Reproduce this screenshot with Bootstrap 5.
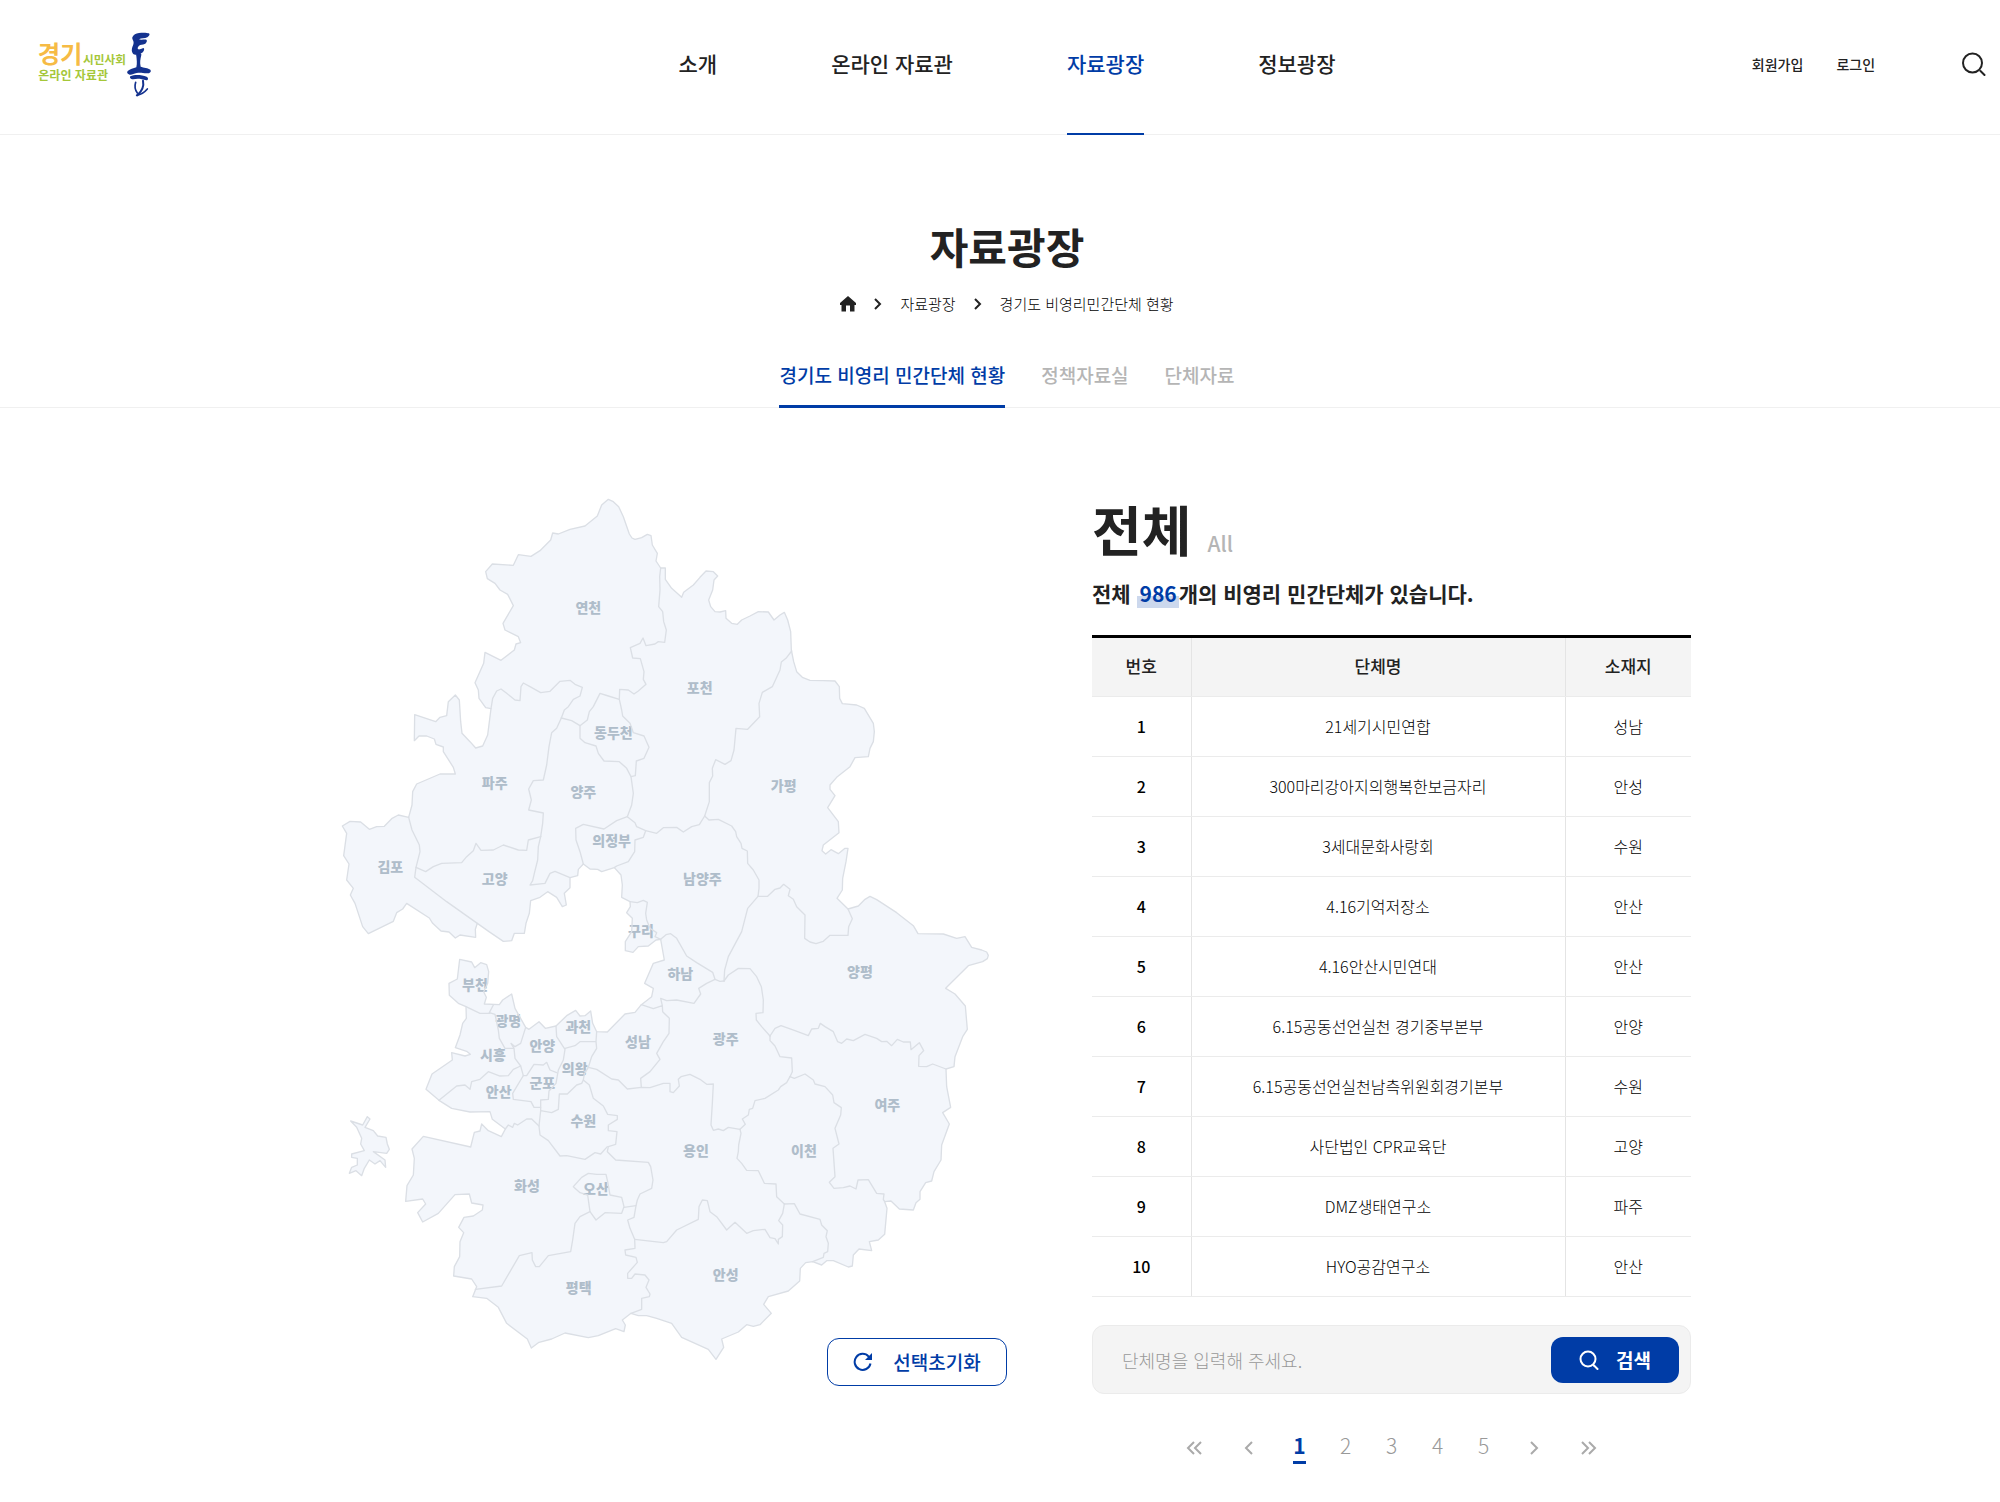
<!DOCTYPE html>
<html lang="ko">
<head>
<meta charset="utf-8">
<meta name="viewport" content="width=device-width, initial-scale=1">
<title>경기도 비영리민간단체 현황 - 자료광장</title>
<link href="https://cdn.jsdelivr.net/npm/bootstrap@5.3.0/dist/css/bootstrap.min.css" rel="stylesheet">
<style>
:root { --brand: #003ca6; --ink: #222; --muted: #b5b5b5; --line: #f0f0f0; }
body { font-family: "Noto Sans CJK KR", "Noto Sans", sans-serif; color: var(--ink); background: #fff; font-size: 16px; line-height: 24px; }
a { color: inherit; text-decoration: none; }
svg { display: block; }
.medium { font-weight: 500; }
.thin { font-weight: 300; color: #000; }

.site-head { height: 135px; border-bottom: 1px solid var(--line); }
.head-side { flex: 1 1 0; }
.brand-link { margin-left: 36px; }
.main-menu { gap: 114px; padding-left: 28px; font-size: 21px; }
.main-menu a { line-height: 127px; height: 135px; display: block; }
.main-menu a.current { color: var(--brand); border-bottom: 2px solid var(--brand); }
.user-menu { gap: 33px; font-size: 14px; padding-right: 14px; margin-top: -7px; }
.search-toggle { margin-left: 54px; padding: 0; border: 0; background: none; color: var(--ink); }

.page-head { border-bottom: 1px solid var(--line); padding: 80px 0 0 14px; }
.page-title { font-size: 42px; line-height: 62px; font-weight: 700; margin: 0; }
.trail { gap: 18px; font-size: 15px; margin: 15px 0 0; }
.section-tabs { gap: 36px; font-size: 19px; margin-top: 38px; color: var(--muted); }
.section-tabs a { display: block; line-height: 42px; padding-bottom: 9px; }
.section-tabs a.current { color: var(--brand); border-bottom: 3px solid var(--brand); margin-bottom: -1px; }

.content-wrap { max-width: 1382px; margin: 90px auto 30px; gap: 85px; }
.map-pane { flex: 1 1 0; min-width: 0; }
.list-pane { flex: 0 0 599px; }
.region-map { width: 100%; height: auto; }
.land { fill: #f3f6fb; }
.edge { fill: none; stroke: #dbdfe5; stroke-width: 4; stroke-linejoin: round; stroke-linecap: round; }
.place { font-size: 42px; font-weight: 900; fill: #afbdca; text-anchor: middle; }
.reset-btn { width: 180px; height: 48px; margin-top: -24px; border: 1px solid var(--brand); border-radius: 12px; background: #fff; color: var(--brand); font-size: 19px; gap: 20px; position: relative; }

.list-top { margin-top: -3px; }
.list-title { font-size: 54px; line-height: 68px; font-weight: 700; margin: 0; }
.list-sub { font-size: 21px; color: var(--muted); margin: 0 0 8px 16px; }
.list-count { font-size: 21px; line-height: 30px; font-weight: 700; margin: 15px 0 27px; }
.hit-count { color: var(--brand); padding: 0 2px 0 3px; background: linear-gradient(transparent 60%, #ccd8ed 60%); }
.org-table { width: 100%; table-layout: fixed; border-top: 3px solid #000; text-align: center; }
.org-table th, .org-table td { height: 60px; padding: 0 8px 2px; border-bottom: 1px solid #ebebeb; vertical-align: middle; }
.org-table th + th, .org-table th + td, .org-table td + td { border-left: 1px solid #e4e4e4; }
.org-table thead th { background: #f4f4f4; font-size: 17px; }
.col-num { width: 99px; }
.col-place { width: 126px; }

.find-box { margin-top: 28px; height: 69px; border: 1px solid #ebebeb; border-radius: 12px; background: #f4f4f4; padding: 0 11px 0 29px; }
.find-box input { flex: 1 1 0; min-width: 0; height: 44px; line-height: 32px; border: 0; background: none; outline: 0; font-size: 18px; font-weight: 300; padding: 0; }
.find-box input::placeholder { color: #999; opacity: 1; }
.find-btn { width: 128px; height: 46px; border: 0; border-radius: 12px; background: var(--brand); color: #fff; font-size: 19px; font-weight: 700; gap: 17px; }
.pager { margin: 35px 0 0; gap: 33px; font-size: 21px; color: #999; }
.pager a { display: block; width: 13px; text-align: center; line-height: 32px; }
.pager a.current { color: var(--brand); font-weight: 700; border-bottom: 3px solid var(--brand); }
.pager a.step { width: 16px; margin: 3px 3px 0; color: #aaa; }
</style>
</head>
<body>
<header class="site-head d-flex align-items-center">
  <div class="head-side">
    <a class="brand-link d-inline-block" href="#" aria-label="경기시민사회 온라인 자료관 톺">
      <svg width="116" height="70" viewBox="18 18 348 210">
        <g font-weight="700">
          <text x="23" y="118" font-size="73" fill="#f6bb45">경기</text>
          <text x="159" y="121" font-size="35" fill="#a5c739">시민사회</text>
          <text x="25" y="169" font-size="36" fill="#a5c739">온라인 자료관</text>
        </g>
        <g fill="#14328f">
          <path d="M307 40c4-9 10-12 20-13 12-2 25-1 30 1 4 3 0 9-5 12-8 4-18 2-25 6 5 3 16 0 22 1 4 3 0 10-5 13-6 3-13 2-17 5-5 5-5 9-2 11 4 1 9-2 15-4 4 1 3 8-1 12-3 4-8 4-12 6-6 4-14 3-18-1-5-6-4-13-2-20 3-7 5-11 3-18-2-5-4-6-3-11z"/>
          <path d="M321 88c7-3 14-1 13 5-3 12-5 22-2 35 8 3 23 4 29 9 4 6-1 11-10 11-14-1-20-3-31-1-9 2-14 6-21 5-6-2-10-6-6-11 7-6 17-8 26-11 3-12 1-24 0-34-1-3-1-5 2-8z"/>
          <path d="M301 157c14-6 34-4 49 1 6 3 5 11-1 11-15-5-28-6-39-3-6 1-13-5-9-9z"/>
        </g>
        <g fill="none" stroke="#14328f" stroke-linecap="round" stroke-linejoin="round">
          <path d="M317 175c-4 13-3 22 5 32" stroke-width="5"/>
          <path d="M339 170c3 14-2 30-17 44" stroke-width="6"/>
          <path d="M320 214c13-2 22-7 32-19" stroke-width="5"/>
        </g>
      </svg>
    </a>
  </div>
  <nav class="main-menu medium d-flex" aria-label="주 메뉴">
    <a href="#">소개</a>
    <a href="#">온라인 자료관</a>
    <a href="#" class="current" aria-current="page">자료광장</a>
    <a href="#">정보광장</a>
  </nav>
  <div class="head-side user-menu medium d-flex justify-content-end align-items-center">
    <a href="#">회원가입</a>
    <a href="#">로그인</a>
    <button type="button" class="search-toggle" aria-label="검색 열기">
      <svg width="24" height="24" viewBox="0 0 24 24" fill="none" stroke="currentColor" stroke-width="2" stroke-linecap="round"><circle cx="10.500" cy="11" r="9.500"/><path d="M18.500 19l4 4"/></svg>
    </button>
  </div>
</header>

<main>
  <section class="page-head d-flex flex-column align-items-center">
    <h1 class="page-title">자료광장</h1>
    <nav class="trail thin d-flex align-items-center" aria-label="현재 위치">
      <a href="#" aria-label="홈"><svg width="16" height="16" viewBox="0 0 16 16" fill="#222"><path d="M8 0L0 7v2h1.500v6.500h4.500v-6h4v6h4.500V9H16V7z"/></svg></a>
      <svg width="8" height="12" viewBox="0 0 8 12" fill="none" stroke="#222" stroke-width="2"><path d="M1 1l5 5-5 5"/></svg>
      <a href="#">자료광장</a>
      <svg width="8" height="12" viewBox="0 0 8 12" fill="none" stroke="#222" stroke-width="2"><path d="M1 1l5 5-5 5"/></svg>
      <a href="#" aria-current="page">경기도 비영리민간단체 현황</a>
    </nav>
    <nav class="section-tabs medium d-flex" aria-label="자료광장 메뉴">
      <a href="#" class="current" aria-current="page">경기도 비영리 민간단체 현황</a>
      <a href="#">정책자료실</a>
      <a href="#">단체자료</a>
    </nav>
  </section>

  <div class="content-wrap d-flex align-items-start">
    <section class="map-pane d-flex flex-column align-items-end" aria-label="경기도 지도">
      <svg class="region-map" viewBox="-63 24 2094 2592" role="img" aria-label="경기도 시군 지도">
        <defs>
          <path id="province" d="M835 28L850 35 866 50 880 80 898 132 906 144 915 148 935 143 952 133 963 137 967 165 982 190 978 213 992 234 1006 234 1006 268 1025 295 1055 322 1061 307 1090 285 1110 262 1128 243 1150 245 1163 258 1152 270 1148 300 1136 330 1142 350 1155 365 1170 366 1187 362 1188 385 1205 400 1222 403 1235 390 1260 378 1285 365 1315 366 1332 390 1350 375 1363 367 1373 390 1382 425 1384 480 1391 515 1400 545 1417 562 1440 571 1480 572 1515 573 1528 590 1529 625 1537 641 1580 645 1603 655 1630 700 1633 725 1630 755 1620 775 1615 800 1575 803 1560 830 1520 862 1500 885 1500 898 1515 917 1493 953 1525 995 1527 1028 1480 1065 1476 1082 1487 1092 1503 1079 1525 1091 1545 1075 1554 1075 1548 1115 1538 1165 1537 1200 1521 1225 1554 1257 1585 1248 1605 1228 1620 1219 1640 1229 1700 1268 1750 1307 1764 1331 1840 1332 1880 1345 1905 1340 1925 1372 1955 1380 1970 1386 1975 1396 1972 1406 1958 1415 1915 1427 1847 1495 1875 1512 1906 1548 1912 1618 1898 1640 1875 1700 1872 1730 1848 1737 1850 1790 1862 1852 1838 1868 1858 1902 1835 1965 1833 2010 1812 2045 1805 2073 1787 2078 1770 2105 1770 2128 1758 2138 1750 2160 1708 2157 1683 2133 1664 2135 1671 2155 1664 2233 1645 2250 1618 2255 1625 2282 1587 2277 1570 2295 1567 2328 1555 2331 1510 2312 1490 2312 1475 2325 1448 2315 1427 2318 1411 2335 1409 2373 1375 2403 1315 2420 1301 2443 1324 2470 1290 2504 1270 2509 1250 2504 1225 2526 1175 2547 1181 2572 1158 2608 1135 2578 1055 2542 1025 2500 980 2485 950 2477 925 2477 903 2470 877 2490 886 2505 882 2525 857 2516 805 2537 775 2543 705 2529 665 2547 627 2557 604 2574 592 2547 530 2500 505 2452 470 2425 428 2420 440 2390 425 2367 371 2358 373 2330 389 2300 390 2255 401 2228 386 2212 402 2182 430 2178 457 2160 459 2145 425 2139 418 2112 375 2114 325 2170 278 2196 263 2168 287 2142 278 2127 227 2134 231 2087 250 2055 253 2005 246 1977 280 1939 422 1971 433 1927 450 1923 455 1902 475 1922 514 1940 526 1917 487 1888 480 1865 420 1866 365 1855 327 1831 288 1798 306 1752 367 1710 365 1688 405 1698 421 1693 410 1684 376 1673 390 1635 398 1600 409 1585 408 1550 385 1540 358 1516 357 1480 382 1467 389 1408 425 1416 434 1433 452 1418 470 1424 476 1445 473 1480 461 1505 469 1522 463 1542 508 1544 518 1530 545 1512 555 1555 587 1612 597 1618 627 1595 646 1615 678 1608 710 1577 737 1561 750 1578 765 1577 782 1563 788 1600 800 1625 832 1626 885 1572 915 1567 934 1544 965 1520 970 1495 944 1480 970 1420 1003 1410 992 1348 978 1350 955 1368 925 1370 909 1387 886 1382 886 1355 905 1325 907 1285 890 1268 901 1250 900 1235 875 1222 877 1185 873 1155 853 1133 815 1145 803 1138 780 1137 760 1122 745 1138 743 1157 720 1163 720 1193 703 1210 709 1245 697 1250 680 1222 653 1205 630 1222 602 1232 598 1270 588 1300 583 1330 553 1330 545 1352 520 1354 477 1325 442 1300 436 1318 437 1342 390 1335 376 1344 357 1326 333 1323 308 1300 298 1284 230 1240 218 1257 200 1268 190 1294 115 1331 98 1310 75 1240 61 1215 70 1195 50 1170 57 1122 41 1097 50 1030 37 1008 60 994 92 996 118 1018 140 1010 163 1009 185 986 205 975 236 982 246 945 248 905 260 882 330 852 376 852 370 832 340 785 340 771 318 763 313 747 290 738 267 738 253 752 254 674 317 695 330 682 350 677 355 635 376 615 388 630 392 695 396 730 420 755 437 774 458 768 473 735 483 656 467 653 447 625 445 600 435 578 461 520 465 487 513 511 553 480 558 462 572 458 565 440 525 420 519 400 550 347 533 313 510 300 495 280 472 266 467 245 487 222 550 226 565 194 603 199 630 182 662 150 668 129 685 132 720 118 765 108 802 78 815 45Z"/>
        </defs>
        <use href="#province" class="land"/>
        <path class="edge" style="fill:#f3f6fb" d="M62 1893L98 1905 112 1880 120 1887 105 1912 130 1922 143 1938 168 1942 172 1962 178 1978 170 1990 130 1985 165 2010 167 2032 150 2012 135 2022 118 2010 103 2035 95 2057 78 2042 58 2050 65 2032 82 2025 82 2005 65 2002 65 1992 103 1982 92 1962 95 1945 80 1912Z"/>
        <g class="place">
          <text x="775" y="369">연천</text><text x="1109" y="609">포천</text><text x="850" y="743">동두천</text>
          <text x="494" y="893">파주</text><text x="760" y="920">양주</text><text x="1361" y="902">가평</text>
          <text x="845" y="1068">의정부</text><text x="181" y="1146">김포</text><text x="494" y="1183">고양</text>
          <text x="1117" y="1183">남양주</text><text x="933" y="1337">구리</text><text x="1051" y="1467">하남</text>
          <text x="1590" y="1461">양평</text><text x="435" y="1501">부천</text><text x="535" y="1608">광명</text>
          <text x="745" y="1625">과천</text><text x="637" y="1682">안양</text><text x="924" y="1670">성남</text>
          <text x="489" y="1709">시흥</text><text x="734" y="1751">의왕</text><text x="637" y="1795">군포</text>
          <text x="506" y="1822">안산</text><text x="1187" y="1661">광주</text><text x="1672" y="1861">여주</text>
          <text x="760" y="1907">수원</text><text x="1098" y="1998">용인</text><text x="1422" y="1998">이천</text>
          <text x="591" y="2104">화성</text><text x="798" y="2113">오산</text><text x="746" y="2408">평택</text>
          <text x="1187" y="2370">안성</text>
        </g>
        <use href="#province" class="edge"/>
        <g class="edge">
          <path d="M992 234L989 260 990 300 986 350 998 365 1001 395 1009 420 1004 457 985 455 975 462 948 467 939 444 930 460 901 473 908 504 931 506 942 545 940 568 948 583 925 603 912 612 895 600 869 598 868 628"/>
          <path d="M483 656L488 625 500 603 513 597 530 610 555 630 570 632 573 590 580 579 600 590 632 608 660 604 690 574 720 571 735 583 757 592 750 618 730 628 715 650 703 660 694 684"/>
          <path d="M694 684L725 692 750 707 772 690 778 665 790 650 810 610 835 618 868 628"/>
          <path d="M868 628L875 660 878 678 900 700 910 728 942 738 957 772 942 805 919 813 916 857 903 860"/>
          <path d="M750 707L750 745 765 758 798 768 805 790 822 813 868 815 890 835 903 860 910 910 905 945 892 980"/>
          <path d="M694 684L680 715 665 728 657 770 650 825 640 870 610 872 596 897 604 930 596 960 640 969 638 1000 632 1040"/>
          <path d="M632 1040L595 1050 590 1081 565 1080 520 1065 490 1080 453 1081 438 1060 430 1082 410 1100 395 1118 335 1120 310 1130 287 1145 258 1132"/>
          <path d="M632 1040L625 1070 623 1110 613 1150 608 1172 600 1185 645 1180 660 1150 675 1144 720 1163"/>
          <path d="M236 982L246 1020 268 1065 270 1085 258 1132 254 1162 350 1235 442 1300"/>
          <path d="M892 980L860 992 822 1017 760 1003 737 1015 738 1050 750 1085 760 1122"/>
          <path d="M892 980L915 998 920 1010 947 1022 940 1042 915 1050 914 1085 895 1115 860 1128 853 1133"/>
          <path d="M947 1022L980 1030 1000 1013 1040 1012 1060 1026 1085 1010 1108 1004 1124 978"/>
          <path d="M1385 483L1368 505 1354 516 1350 540 1327 590 1297 607 1287 640 1289 680 1253 718 1218 715 1212 780 1203 812 1185 823 1157 809 1147 835 1148 858 1138 878 1138 935 1124 978"/>
          <path d="M1124 978L1137 990 1165 988 1205 1008 1217 1025 1220 1040 1233 1060 1236 1075 1252 1083 1253 1120 1270 1140 1287 1170 1287 1195 1284 1219"/>
          <path d="M1284 1219L1313 1219 1335 1198 1350 1194 1361 1183 1380 1198 1375 1217 1390 1228 1400 1250 1425 1275 1424 1345 1440 1356 1458 1361 1480 1354 1500 1336 1554 1336 1556 1310 1567 1286 1554 1257"/>
          <path d="M1284 1219L1253 1255 1235 1325 1195 1400 1184 1440 1182 1473"/>
          <path d="M992 1348L1008 1334 1022 1331 1040 1345 1070 1398 1100 1418 1148 1447 1155 1468 1170 1474 1182 1473"/>
          <path d="M900 1235L922 1238 940 1231 952 1237 947 1270 950 1290 960 1315 980 1328 975 1340 992 1348"/>
          <path d="M1155 1468L1130 1480 1106 1495 1112 1512 1092 1540 1040 1530 1010 1532 992 1525 997 1547"/>
          <path d="M934 1544L970 1556 997 1547 998 1565 1018 1585 1017 1630 1000 1655 980 1690 990 1708 960 1745 932 1765 934 1792"/>
          <path d="M1182 1473L1195 1455 1225 1435 1260 1436 1280 1460 1294 1490 1300 1530 1299 1568 1278 1570 1279 1590 1295 1610 1320 1638"/>
          <path d="M1320 1638L1335 1615 1353 1607 1395 1622 1435 1637 1445 1617 1465 1615 1471 1600 1485 1610 1510 1625 1523 1655 1535 1660 1550 1647 1570 1652 1605 1633 1640 1645 1655 1655 1670 1654 1685 1667 1702 1648 1720 1656 1741 1656 1743 1679 1768 1658 1781 1682 1767 1697 1766 1729 1790 1730 1808 1722 1848 1737"/>
          <path d="M1320 1638L1320 1652 1335 1668 1350 1700 1385 1704 1387 1745 1380 1760"/>
          <path d="M1380 1760L1393 1765 1425 1752 1450 1770 1455 1782 1485 1790 1508 1815 1512 1838 1534 1853 1532 1875 1515 1915 1527 1962 1509 1975 1515 2060 1498 2077 1512 2095 1540 2093 1560 2088 1578 2097 1584 2070 1615 2069 1640 2110 1662 2112 1660 2128 1664 2135"/>
          <path d="M1380 1760L1370 1778 1352 1790 1345 1800 1305 1825 1275 1832 1268 1855 1258 1858 1255 1875 1237 1887 1246 1903 1230 1918"/>
          <path d="M775 1732L800 1738 845 1767 865 1770 892 1797 934 1792 960 1793 1000 1780 1020 1780 1020 1805 1030 1808 1048 1788 1045 1768 1053 1760 1080 1753 1110 1768 1130 1783 1150 1782 1147 1840 1143 1905 1150 1921 1165 1917 1180 1922 1195 1912 1230 1918"/>
          <path d="M1230 1918L1233 1930 1226 1965 1225 1985 1221 2005 1235 2020 1250 2041 1285 2042 1303 2080 1338 2082 1340 2120 1363 2142"/>
          <path d="M1363 2142L1393 2141 1410 2172 1470 2188 1475 2205 1492 2222 1488 2240 1495 2260 1493 2285 1482 2290 1480 2302 1448 2315"/>
          <path d="M1363 2142L1358 2170 1346 2192 1358 2205 1357 2240 1345 2248 1345 2262 1335 2246 1320 2243 1305 2218 1270 2222 1250 2230 1215 2197 1190 2220 1160 2180 1140 2165 1132 2132 1117 2130 1107 2150 1105 2188 1040 2220 1010 2255 1000 2258 914 2248"/>
          <path d="M760 1770L778 1785 790 1825 820 1848 833 1873 862 1877 862 1888 835 1905 835 1922 861 1925 857 1963 835 1970 832 1985 857 2010 955 2017 962 2030 969 2070 965 2095 930 2112 922 2130 918 2147 912 2182 893 2190 900 2215 914 2248"/>
          <path d="M914 2248L915 2275 885 2280 887 2295 918 2302 922 2317 893 2350 893 2365 905 2365 915 2352 945 2355 957 2370 948 2392 960 2412 958 2420 935 2425 935 2458 903 2470"/>
          <path d="M730 2090L755 2062 775 2050 800 2053 828 2053 833 2075 840 2115 875 2122 882 2150 875 2170 825 2168 798 2190 780 2165 773 2115 750 2108Z"/>
          <path d="M882 2152L918 2147"/>
          <path d="M780 2165L750 2180 735 2200 728 2250 722 2285 655 2297 628 2330 617 2330 607 2310 606 2288 568 2297 515 2388 436 2398"/>
          <path d="M526 1917L535 1905 548 1912 553 1900 563 1905 590 1887 605 1887 627 1908 630 1935 655 1952 690 1998 710 1997 765 2008 795 1988 812 1992 832 1970"/>
          <path d="M627 1908L632 1862 665 1868 685 1858 688 1812 712 1812 740 1785 755 1780 760 1770 763 1752 775 1732"/>
          <path d="M800 1625L798 1655 800 1675 785 1700 775 1732M798 1655L750 1655 735 1667 705 1675"/>
          <path d="M678 1608L680 1640 705 1678 700 1710 685 1740 678 1780 657 1803 655 1828 632 1830 632 1862"/>
          <path d="M632 1852L612 1852 603 1835 550 1828 548 1810 572 1770 580 1757 590 1757 612 1723 640 1725 650 1717 660 1740 680 1748"/>
          <path d="M490 1545L478 1568 495 1573 505 1620 508 1645 525 1675 550 1675M408 1550L450 1570 480 1570"/>
          <path d="M587 1612L572 1660 555 1670 543 1660 552 1675 555 1705 572 1728 580 1757"/>
          <path d="M327 1831L380 1788 405 1785 420 1798 425 1775 450 1768 475 1745 510 1758 535 1757 550 1738 572 1728"/>
        </g>
      </svg>
      <button type="button" class="reset-btn medium d-flex align-items-center justify-content-center">
        <svg width="20" height="20" viewBox="0 0 20 20" fill="none" stroke="currentColor" stroke-width="2"><path d="M17.500 11.500A8 8 0 1 1 15.700 4.600L18 7"/><path d="M19 1v7h-7z" fill="currentColor" stroke="none"/></svg>
        선택초기화
      </button>
    </section>

    <section class="list-pane">
      <div class="list-top d-flex align-items-end">
        <h2 class="list-title">전체</h2>
        <span class="list-sub medium">All</span>
      </div>
      <p class="list-count">전체 <span class="hit-count">986</span>개의 비영리 민간단체가 있습니다.</p>
      <table class="org-table">
        <colgroup><col class="col-num"><col><col class="col-place"></colgroup>
        <thead>
          <tr><th scope="col" class="medium">번호</th><th scope="col" class="medium">단체명</th><th scope="col" class="medium">소재지</th></tr>
        </thead>
        <tbody class="thin">
          <tr><th scope="row" class="medium">1</th><td>21세기시민연합</td><td>성남</td></tr>
          <tr><th scope="row" class="medium">2</th><td>300마리강아지의행복한보금자리</td><td>안성</td></tr>
          <tr><th scope="row" class="medium">3</th><td>3세대문화사랑회</td><td>수원</td></tr>
          <tr><th scope="row" class="medium">4</th><td>4.16기억저장소</td><td>안산</td></tr>
          <tr><th scope="row" class="medium">5</th><td>4.16안산시민연대</td><td>안산</td></tr>
          <tr><th scope="row" class="medium">6</th><td>6.15공동선언실천 경기중부본부</td><td>안양</td></tr>
          <tr><th scope="row" class="medium">7</th><td>6.15공동선언실천남측위원회경기본부</td><td>수원</td></tr>
          <tr><th scope="row" class="medium">8</th><td>사단법인 CPR교육단</td><td>고양</td></tr>
          <tr><th scope="row" class="medium">9</th><td>DMZ생태연구소</td><td>파주</td></tr>
          <tr><th scope="row" class="medium">10</th><td>HYO공감연구소</td><td>안산</td></tr>
        </tbody>
      </table>
      <form class="find-box d-flex align-items-center" role="search">
        <input id="orgName" type="text" aria-label="단체명" placeholder="단체명을 입력해 주세요.">
        <button type="button" class="find-btn d-flex align-items-center justify-content-center">
          <svg width="20" height="20" viewBox="0 0 20 20" fill="none" stroke="currentColor" stroke-width="2" stroke-linecap="round"><circle cx="9" cy="9" r="7.500"/><path d="M15 15.500l3.500 3.500"/></svg>
          검색
        </button>
      </form>
      <nav class="pager d-flex justify-content-center" aria-label="페이지">
        <a class="step" href="#" aria-label="처음"><svg width="16" height="32" viewBox="0 0 16 32" fill="none" stroke="currentColor" stroke-width="2"><path d="M8 10l-6 6 6 6M15 10l-6 6 6 6"/></svg></a>
        <a class="step" href="#" aria-label="이전"><svg width="16" height="32" viewBox="0 0 16 32" fill="none" stroke="currentColor" stroke-width="2"><path d="M11 10l-6 6 6 6"/></svg></a>
        <a href="#" class="current" aria-current="page">1</a>
        <a href="#" class="fw-light">2</a>
        <a href="#" class="fw-light">3</a>
        <a href="#" class="fw-light">4</a>
        <a href="#" class="fw-light">5</a>
        <a class="step" href="#" aria-label="다음"><svg width="16" height="32" viewBox="0 0 16 32" fill="none" stroke="currentColor" stroke-width="2"><path d="M5 10l6 6-6 6"/></svg></a>
        <a class="step" href="#" aria-label="마지막"><svg width="16" height="32" viewBox="0 0 16 32" fill="none" stroke="currentColor" stroke-width="2"><path d="M1 10l6 6-6 6M8 10l6 6-6 6"/></svg></a>
      </nav>
    </section>
  </div>
</main>
<script src="https://cdn.jsdelivr.net/npm/bootstrap@5.3.0/dist/js/bootstrap.bundle.min.js"></script>
</body>
</html>
